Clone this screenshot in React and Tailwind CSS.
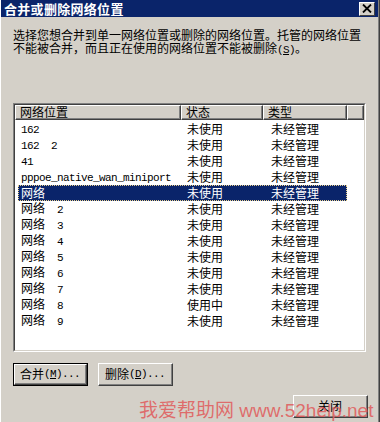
import React from 'react';

const ROWS = [
  ['162', '未使用'],
  ['162  2', '未使用'],
  ['41', '未使用'],
  ['pppoe_native_wan_miniport', '未使用'],
  ['网络', '未使用', true],
  ['网络  2', '未使用'],
  ['网络  3', '未使用'],
  ['网络  4', '未使用'],
  ['网络  5', '未使用'],
  ['网络  6', '未使用'],
  ['网络  7', '未使用'],
  ['网络  8', '使用中'],
  ['网络  9', '未使用'],
];

const MONO = "font-['Liberation_Mono'] text-[11px] tracking-[-0.6px] whitespace-pre";

// ASCII runs get a half-width mono face, like the bitmap font in the shot
function Txt({ s }) {
  return s.split(/([\x20-\x7e]+)/).map((p, i) =>
    /^[\x20-\x7e]+$/.test(p) ? (
      <span key={i} className={MONO}>{p}</span>
    ) : (
      <React.Fragment key={i}>{p}</React.Fragment>
    )
  );
}

function Mnemonic({ k }) {
  return (
    <span className={MONO}>
      (<span className="underline">{k}</span>)...
    </span>
  );
}

function Button({ children, isDefault }) {
  return (
    <div className={`w-[75px] h-[23px] ${isDefault ? 'border border-black' : ''}`}>
      <div className="w-full h-full border-t border-l border-white border-r border-b border-r-[#404040] border-b-[#404040]">
        <div className="w-full h-full border-r border-b border-[#808080] flex items-center justify-center text-[12px] leading-[12px] text-black">
          {children}
        </div>
      </div>
    </div>
  );
}

function HeaderCell({ w, children }) {
  return (
    <div className={`${w} h-full border-t border-l border-white border-r border-b border-r-[#404040] border-b-[#404040] shrink-0`}>
      <div className="h-full border-r border-b border-[#808080] pl-[4px] flex items-center text-[12px] leading-[12px] text-black">
        {children}
      </div>
    </div>
  );
}

export default function App() {
  return (
    <div className="relative w-[380px] h-[422px] overflow-hidden bg-[#d4d0c8] border-l border-white border-r border-r-[#404040] font-['Noto_Sans_CJK_SC',sans-serif]">
      <div className="h-full border-r border-[#808080] flex flex-col">
        {/* title bar */}
        <div className="h-[17px] bg-[#0a246a] flex items-center justify-between pl-[3px] pr-[3px]">
          <span className="text-white font-bold text-[13px] leading-[13px] tracking-[0.3px]">合并或删除网络位置</span>
          <div className="w-[16px] h-[14px] bg-[#d4d0c8] border-t border-l border-white border-r border-b border-r-[#404040] border-b-[#404040] flex items-center justify-center">
            <svg width="10" height="9" viewBox="0 0 10 9">
              <path d="M1 0.5 L9 8.5 M9 0.5 L1 8.5" stroke="#000" strokeWidth="1.8" />
            </svg>
          </div>
        </div>

        <div className="pl-[12px] flex flex-col">
          <p className="mt-[11px] text-[12px] leading-[13px] text-black whitespace-nowrap">
            选择您想合并到单一网络位置或删除的网络位置。托管的网络位置
            <br />
            不能被合并，而且正在使用的网络位置不能被删除
            <span className={MONO}>
              (<span className="underline">S</span>)
            </span>
            。
          </p>

          {/* list view */}
          <div className="mt-[46px] w-[353px] h-[249px] border-t border-l border-[#808080] border-r border-b border-r-white border-b-white">
            <div className="w-full h-full border-t border-l border-[#404040] border-r border-b border-r-[#d4d0c8] border-b-[#d4d0c8] bg-white flex flex-col">
              <div className="h-[15px] flex bg-[#d4d0c8]">
                <HeaderCell w="w-[166px]">网络位置</HeaderCell>
                <HeaderCell w="w-[82px]">状态</HeaderCell>
                <HeaderCell w="w-[84px]">类型</HeaderCell>
                <HeaderCell w="flex-1"> </HeaderCell>
              </div>
              <div className="flex flex-col pt-[1px]">
                {ROWS.map(([name, status, sel], i) => (
                  <div
                    key={i}
                    className={`ml-[3px] w-[329px] h-[16px] flex items-center text-[12px] leading-[12px] ${
                      sel ? 'bg-[#0a246a] text-white outline outline-1 outline-dotted outline-offset-[-1px] outline-[#e8cf8a]' : 'text-black'
                    }`}
                  >
                    <div className="w-[163px] pl-[3px] whitespace-pre"><Txt s={name} /></div>
                    <div className="w-[82px] pl-[6px]">{status}</div>
                    <div className="w-[84px] pl-[8px]">未经管理</div>
                  </div>
                ))}
              </div>
            </div>
          </div>

          <div className="mt-[11px] flex gap-[10px]">
            <Button isDefault>
              <span>合并</span>
              <Mnemonic k="M" />
            </Button>
            <Button>
              <span>删除</span>
              <Mnemonic k="D" />
            </Button>
          </div>

          <div className="mt-[9px] flex justify-end pr-[10px]">
            <Button>关闭</Button>
          </div>
        </div>
      </div>

      {/* watermark */}
      <div className="absolute left-[138px] top-[399px] text-[19px] leading-[20px] text-[#e05a5a]/85 whitespace-nowrap pointer-events-none">
        我爱帮助网
        <span className="font-['Liberation_Sans']"> www.52help.net</span>
      </div>
    </div>
  );
}
